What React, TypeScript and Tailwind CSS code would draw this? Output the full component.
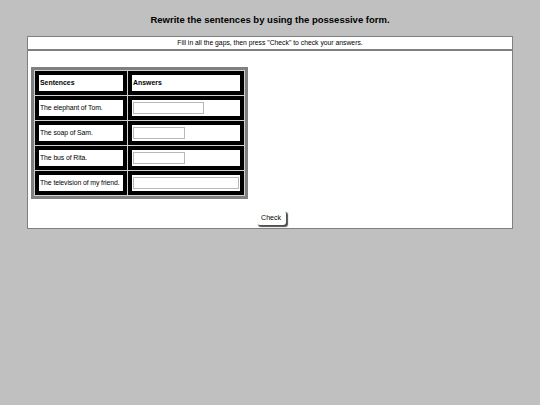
import React from "react";

const rows: { s: string; w: number }[] = [
  { s: "The elephant of Tom.", w: 71 },
  { s: "The soap of Sam.", w: 52 },
  { s: "The bus of Rita.", w: 52 },
  { s: "The television of my friend.", w: 106 },
];

function Cell({ children, w }: { children: React.ReactNode; w: number }) {
  return (
    <div className="bg-black p-[4px]">
      <div
        className="bg-white h-[16px] flex items-center overflow-hidden whitespace-nowrap"
        style={{ width: w }}
      >
        {children}
      </div>
    </div>
  );
}

export default function App() {
  return (
    <div className="min-h-[405px] bg-[#c0c0c0] pt-[14px] font-['Liberation_Sans',Arial,sans-serif] text-black">
      <h2 className="text-center font-bold text-[9.5px] leading-[12px]">
        Rewrite the sentences by using the possessive form.
      </h2>
      <div className="mx-[27px] mt-[10px] border border-[#808080] bg-white">
        <div className="h-[14px] flex items-center justify-center text-[6.8px] border-b-2 border-[#808080]">
          Fill in all the gaps, then press "Check" to check your answers.
        </div>
        <div className="pt-[16px] pl-[3px] pb-[3px]">
          <div className="inline-block bg-[#808080] p-[3px]">
            <div className="grid grid-cols-[auto_auto] gap-[1px] p-[1px] bg-[#d0d0d0]">
              <Cell w={84}>
                <span className="pl-[1px] text-[6.9px] font-bold">Sentences</span>
              </Cell>
              <Cell w={108}>
                <span className="pl-[1px] text-[6.9px] font-bold">Answers</span>
              </Cell>
              {rows.map((r) => (
                <React.Fragment key={r.s}>
                  <Cell w={84}>
                    <span className="pl-[1px] text-[6.9px] tracking-[-0.1px]">{r.s}</span>
                  </Cell>
                  <Cell w={108}>
                    <div
                      className="ml-[1px] h-[12px] border border-[#b8b8b8] bg-white"
                      style={{ width: r.w }}
                    />
                  </Cell>
                </React.Fragment>
              ))}
            </div>
          </div>
          <div className="flex justify-center mt-[12px] pr-[3px]">
            <button className="w-[29px] h-[14px] bg-white rounded-[3px] text-[7px] leading-[14px] shadow-[1.5px_1.5px_1px_#505050] ml-[2px]">
              Check
            </button>
          </div>
        </div>
      </div>
    </div>
  );
}
